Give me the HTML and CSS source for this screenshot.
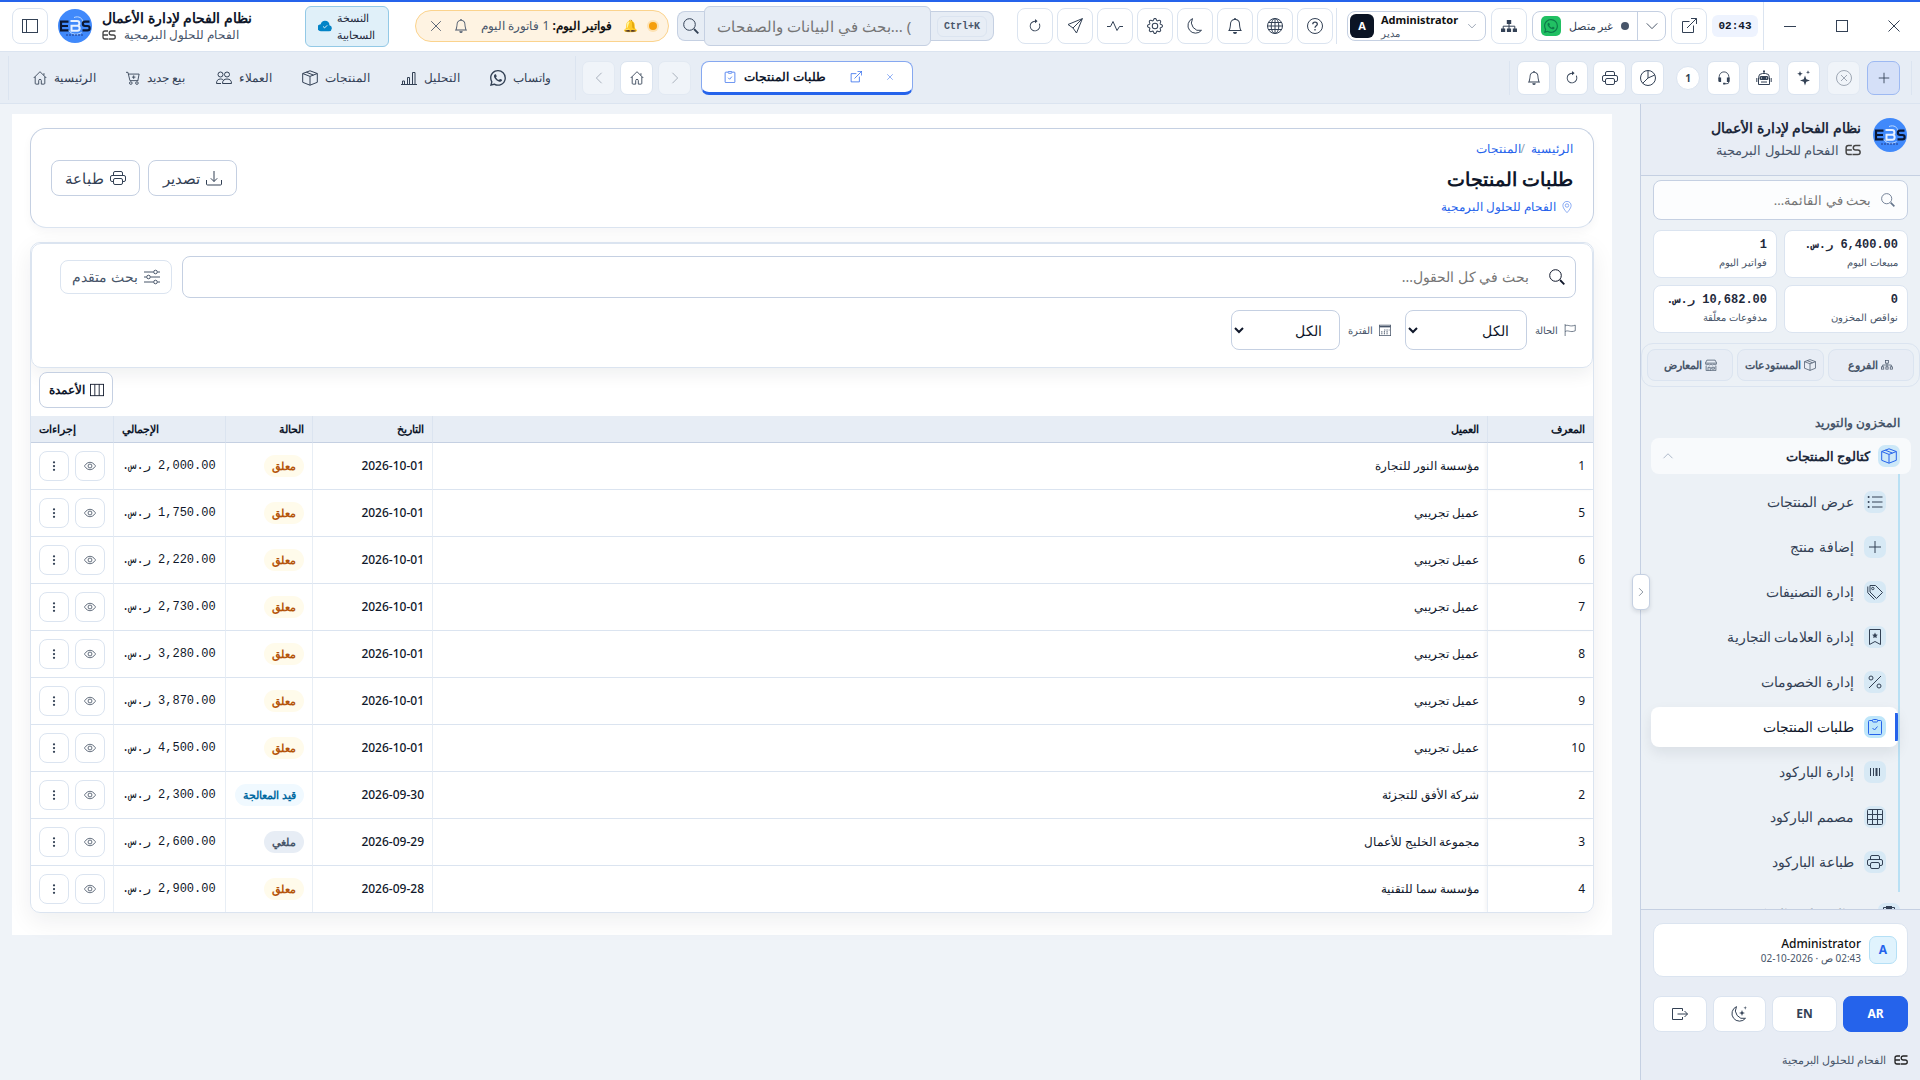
FILE: index.html
```html
<!DOCTYPE html>
<html lang="ar" dir="rtl">
<head>
<meta charset="utf-8">
<meta name="viewport" content="width=device-width, initial-scale=1">
<title>طلبات المنتجات</title>
<link rel="stylesheet" href="styles.css">
</head>
<body>
<svg class="sprite" aria-hidden="true">
  <symbol id="whatsapp" viewBox="0 0 16 16"><path d="M13.601 2.326A7.85 7.85 0 0 0 7.994 0C3.627 0 .068 3.558.064 7.926c0 1.399.366 2.76 1.057 3.965L0 16l4.204-1.102a7.9 7.9 0 0 0 3.79.965h.004c4.368 0 7.926-3.558 7.93-7.93A7.9 7.9 0 0 0 13.6 2.326zM7.994 14.521a6.6 6.6 0 0 1-3.356-.92l-.24-.144-2.494.654.666-2.433-.156-.251a6.56 6.56 0 0 1-1.007-3.505c0-3.626 2.957-6.584 6.591-6.584a6.56 6.56 0 0 1 4.66 1.931 6.56 6.56 0 0 1 1.928 4.66c-.004 3.639-2.961 6.592-6.592 6.592m3.615-4.934c-.197-.099-1.17-.578-1.353-.646-.182-.065-.315-.099-.445.099-.133.197-.513.646-.627.775-.114.133-.232.148-.43.05-.197-.1-.836-.308-1.592-.985-.59-.525-.985-1.175-1.103-1.372-.114-.198-.011-.304.088-.403.087-.088.197-.232.296-.346.1-.114.133-.198.198-.33.065-.134.034-.248-.015-.347-.05-.099-.445-1.076-.612-1.47-.16-.389-.323-.335-.445-.34-.114-.007-.247-.007-.38-.007a.73.73 0 0 0-.529.247c-.182.198-.691.677-.691 1.654s.71 1.916.81 2.049c.098.133 1.394 2.132 3.383 2.992.47.205.84.326 1.129.418.475.152.904.129 1.246.08.38-.058 1.171-.48 1.338-.943.164-.464.164-.86.114-.943-.049-.084-.182-.133-.38-.232" fill="currentColor" stroke="none"/></symbol>
  <symbol id="panel" viewBox="0 0 16 16"><rect x=".5" y="1.5" width="15" height="13"/><path d="M4.5 1.5v13"/></symbol>
  <symbol id="house" viewBox="0 0 16 16"><path d="M.8 8 8 .8 15.200 8M2.500 6.500v7.500a1 1 0 0 0 1 1H6.500v-4a1.500 1.500 0 0 1 3 0v4h3a1 1 0 0 0 1-1V6.500M12.500 5V2.500"/></symbol>
  <symbol id="cart" viewBox="0 0 16 16"><path d="M0 1.500h2.200L4.500 11h9.500M2.700 3.500h12.300l-1.500 7.500M8.800 5v4M6.800 7h4"/><circle cx="5.500" cy="13.800" r="1.500"/><circle cx="12.500" cy="13.800" r="1.500"/></symbol>
  <symbol id="people" viewBox="0 0 16 16"><circle cx="4.500" cy="4.500" r="2.500"/><circle cx="11" cy="4.500" r="2.500"/><path d="M.5 13.500c0-3 1.500-4.500 4-4.500 1.500 0 2.500.5 3.200 1.500M6.500 13.500c0-3 1.500-4.500 4.500-4.500s4.500 1.500 4.500 4.500zM.5 13.500H5"/></symbol>
  <symbol id="box" viewBox="0 0 16 16"><path d="M8 .8 15.300 3.500v8.800L8 15.200.7 12.300V3.500zM.7 3.500 8 6.400l7.300-2.900M8 6.400v8.800M4.300 2.200l7.200 2.900"/></symbol>
  <symbol id="chart" viewBox="0 0 16 16"><path d="M0 14.500h16M1.500 14.500v-3.500h2v3.500M6.500 14.500V7.500h2v7M11.500 14.500v-12h2.500v12"/></symbol>
  <symbol id="left" viewBox="0 0 16 16"><path d="M11 2 5 8l6 6"/></symbol>
  <symbol id="right" viewBox="0 0 16 16"><path d="m5 2 6 6-6 6"/></symbol>
  <symbol id="down" viewBox="0 0 16 16"><path d="m2 5 6 6 6-6"/></symbol>
  <symbol id="up" viewBox="0 0 16 16"><path d="m2 11 6-6 6 6"/></symbol>
  <symbol id="external" viewBox="0 0 16 16"><path d="M8.500 3.500h-7v11h11v-7M10 .5h5.500V6M15.500.5 6 10"/></symbol>
  <symbol id="close" viewBox="0 0 16 16"><path d="m2.500 2.500 11 11M13.500 2.500l-11 11"/></symbol>
  <symbol id="minimize" viewBox="0 0 16 16"><path d="M2 8.500h12"/></symbol>
  <symbol id="maximize" viewBox="0 0 16 16"><rect x="2.500" y="2.500" width="11" height="11"/></symbol>
  <symbol id="clipcheck" viewBox="0 0 16 16"><path d="M5 1.500H2.500a1 1 0 0 0-1 1v12a1 1 0 0 0 1 1h11a1 1 0 0 0 1-1v-12a1 1 0 0 0-1-1H11M5.500 9l2 2 3-3.500"/><rect x="5.500" y=".5" width="5" height="2.500" rx=".8"/></symbol>
  <symbol id="clipboard" viewBox="0 0 16 16"><path d="M5 1.500H2.500v14h11v-14H11"/><rect x="5.500" y=".5" width="5" height="2.500" fill="currentColor"/></symbol>
  <symbol id="bell" viewBox="0 0 16 16"><path d="M8 16a2 2 0 0 0 2-2H6a2 2 0 0 0 2 2M8 1.918l-.797.161A4 4 0 0 0 4 6c0 .628-.134 2.197-.459 3.742-.16.767-.376 1.566-.663 2.258h10.244c-.287-.692-.502-1.49-.663-2.258C12.134 8.197 12 6.628 12 6a4 4 0 0 0-3.203-3.920zM14.220 12c.223.447.481.801.78 1H1c.299-.199.557-.553.78-1C2.680 10.200 3 6.880 3 6c0-2.420 1.720-4.440 4.005-4.901a1 1 0 1 1 1.990 0A5 5 0 0 1 13 6c0 .88.32 4.200 1.220 6" fill="currentColor" stroke="none"/></symbol>
  <symbol id="refresh" viewBox="0 0 16 16"><path d="M8 3a5 5 0 1 0 4.546 2.914.5.5 0 0 1 .908-.417A6 6 0 1 1 8 2z" fill="currentColor" stroke="none"/><path d="M8 4.466V.534a.25.25 0 0 1 .41-.192l2.360 1.966c.12.1.12.284 0 .384L8.410 4.658A.25.25 0 0 1 8 4.466" fill="currentColor" stroke="none"/></symbol>
  <symbol id="send" viewBox="0 0 16 16"><path d="M15.400.6 9.500 15 6 10 1 6.500zM15.400.6 6 10"/></symbol>
  <symbol id="activity" viewBox="0 0 16 16"><path d="M0 8.500h3.500L6 3.500l4 9 2.500-4H16"/></symbol>
  <symbol id="gear" viewBox="0 0 16 16"><path d="M8 4.754a3.246 3.246 0 1 0 0 6.492 3.246 3.246 0 0 0 0-6.492M5.754 8a2.246 2.246 0 1 1 4.492 0 2.246 2.246 0 0 1-4.492 0" fill="currentColor" stroke="none"/><path d="M9.796 1.343c-.527-1.790-3.065-1.790-3.592 0l-.094.319a.873.873 0 0 1-1.255.52l-.292-.16c-1.640-.892-3.433.902-2.540 2.541l.159.292a.873.873 0 0 1-.52 1.255l-.319.094c-1.790.527-1.790 3.065 0 3.592l.319.094a.873.873 0 0 1 .52 1.255l-.16.292c-.892 1.640.901 3.434 2.541 2.540l.292-.159a.873.873 0 0 1 1.255.52l.094.319c.527 1.790 3.065 1.790 3.592 0l.094-.319a.873.873 0 0 1 1.255-.52l.292.16c1.640.893 3.434-.902 2.540-2.541l-.159-.292a.873.873 0 0 1 .52-1.255l.319-.094c1.790-.527 1.790-3.065 0-3.592l-.319-.094a.873.873 0 0 1-.52-1.255l.16-.292c.893-1.640-.902-3.433-2.541-2.540l-.292.159a.873.873 0 0 1-1.255-.52zm-2.633.283c.246-.835 1.428-.835 1.674 0l.094.319a1.873 1.873 0 0 0 2.693 1.115l.291-.16c.764-.415 1.600.42 1.184 1.185l-.159.292a1.873 1.873 0 0 0 1.116 2.692l.318.094c.835.246.835 1.428 0 1.674l-.319.094a1.873 1.873 0 0 0-1.115 2.693l.16.291c.415.764-.42 1.600-1.185 1.184l-.291-.159a1.873 1.873 0 0 0-2.693 1.116l-.094.318c-.246.835-1.428.835-1.674 0l-.094-.319a1.873 1.873 0 0 0-2.692-1.115l-.292.16c-.764.415-1.600-.42-1.184-1.185l.159-.291A1.873 1.873 0 0 0 1.945 8.930l-.319-.094c-.835-.246-.835-1.428 0-1.674l.319-.094A1.873 1.873 0 0 0 3.060 4.377l-.16-.292c-.415-.764.42-1.600 1.185-1.184l.292.159a1.873 1.873 0 0 0 2.692-1.115z" fill="currentColor" stroke="none"/></symbol>
  <symbol id="moon" viewBox="0 0 16 16"><path d="M5.500.6a7.600 7.600 0 1 0 9 11.700A8 8 0 0 1 5.500.6z"/></symbol>
  <symbol id="moonstars" viewBox="0 0 16 16"><path d="M5.500.6a7.600 7.600 0 1 0 9 11.700A8 8 0 0 1 5.500.6z"/><path d="m11 4 .8 2.200L14 7l-2.200.8L11 10l-.8-2.200L8 7l2.200-.8zM14.200 0l.4 1.400L16 1.800l-1.400.5-.4 1.400-.4-1.400-1.400-.5 1.400-.4z" fill="currentColor" stroke="none"/></symbol>
  <symbol id="globe" viewBox="0 0 16 16"><circle cx="8" cy="8" r="7.500"/><ellipse cx="8" cy="8" rx="3.800" ry="7.500"/><path d="M.5 8h15M8 .5v15M1.500 4.500h13M1.500 11.500h13"/></symbol>
  <symbol id="help" viewBox="0 0 16 16"><circle cx="8" cy="8" r="7.500"/><path d="M5.800 6.200C5.800 4.800 6.800 4.200 8 4.200s2.300.7 2.300 2c0 1.600-2.300 1.600-2.300 3.600M8 11v1.500" stroke-width="1.300"/></symbol>
  <symbol id="sitemap" viewBox="0 0 16 16"><path d="M5.800 2h4.400v4H5.800zM0 10.500h4.200v3.500H0zM5.900 10.500h4.200v3.500H5.900zM11.800 10.500H16v3.500h-4.200z" fill="currentColor" stroke="none"/><path d="M8 5v6M2.200 11V8.200h11.600V11"/></symbol>
  <symbol id="branches" viewBox="0 0 16 16"><rect x="6" y="2" width="4" height="3.500"/><path d="M8 5.500V11M2.200 10.500V8h11.600v2.500"/><rect x=".7" y="10.500" width="3" height="3"/><rect x="6.500" y="10.500" width="3" height="3"/><rect x="12.300" y="10.500" width="3" height="3"/></symbol>
  <symbol id="pie" viewBox="0 0 16 16"><circle cx="8" cy="8" r="7.500"/><path d="M8 .5V8L2.700 13.300M8 8l6.800-3"/></symbol>
  <symbol id="headset" viewBox="0 0 16 16"><path d="M2.500 9V6.500a5.500 5.500 0 0 1 11 0V9M13.500 11v1.500a2 2 0 0 1-2 2H9"/><path d="M1.500 7.500h3.200v5H3a1.500 1.500 0 0 1-1.500-1.500zM11.300 7.500h3.200V11a1.500 1.500 0 0 1-1.500 1.500h-1.700zM7 13.500h2.500v2H7z" fill="currentColor" stroke="none"/></symbol>
  <symbol id="robot" viewBox="0 0 16 16"><path d="M8 1v2.500M2.500 14.500v-7a4 4 0 0 1 4-4h3a4 4 0 0 1 4 4v7zM5 12h6M.8 8v4M15.200 8v4"/><rect x="3.500" y="6" width="9" height="4" rx="1.500" fill="currentColor" stroke="none"/><circle cx="8" cy="1.300" r="1" fill="currentColor" stroke="none"/><path d="M5.500 7.500v1M10.500 7.500v1" stroke="#fff"/></symbol>
  <symbol id="stars" viewBox="0 0 16 16"><path d="M9 5.500l1.300 3.700 3.700 1.300-3.700 1.300L9 15.500l-1.300-3.700L4 10.500l3.700-1.300zM4 1l.8 2 2 .8-2 .8L4 6.600l-.8-2-2-.8 2-.8zM12 .2l.5 1.500 1.500.5-1.500.5L12 4.200l-.5-1.500-1.500-.5 1.500-.5z" fill="currentColor" stroke="none"/></symbol>
  <symbol id="xcircle" viewBox="0 0 16 16"><circle cx="8" cy="8" r="7.500"/><path d="m5 5 6 6M11 5l-6 6"/></symbol>
  <symbol id="plus" viewBox="0 0 16 16"><path d="M8 2v12M2 8h12"/></symbol>
  <symbol id="search" viewBox="0 0 16 16"><circle cx="6.500" cy="6.500" r="5.800"/><path d="m11 11 4.300 4.300" stroke-width="1.800"/></symbol>
  <symbol id="cloud" viewBox="0 0 16 16"><path d="M8 2a5 5 0 0 0-4.900 4A4 4 0 0 0 3.800 14h8.700a3.500 3.500 0 0 0 .6-6.900A5.200 5.200 0 0 0 8 2" fill="currentColor" stroke="none"/><path d="m5.800 8.500 1.700 1.700 3-3" stroke="#fff"/></symbol>
  <symbol id="tray" viewBox="0 0 16 16"><path d="M.5 10v4a1 1 0 0 0 1 1h13a1 1 0 0 0 1-1v-4M8 1v10.500M4.800 8.300 8 11.500l3.200-3.200"/></symbol>
  <symbol id="printer" viewBox="0 0 16 16"><path d="M3.500 5.500V3A1.500 1.500 0 0 1 5 1.500h6A1.500 1.500 0 0 1 12.500 3v2.500M3.500 11.500H2A1.500 1.500 0 0 1 .5 10V7A1.500 1.500 0 0 1 2 5.500h12A1.500 1.500 0 0 1 15.500 7v3a1.500 1.500 0 0 1-1.500 1.500h-1.500"/><rect x="3.500" y="8.500" width="9" height="6" rx="1.500"/></symbol>
  <symbol id="sliders" viewBox="0 0 16 16"><path d="M0 3h9.500M13.500 3H16M0 8h2.500M6.500 8H16M0 13h9.500M13.500 13H16"/><circle cx="11.500" cy="3" r="1.800"/><circle cx="4.500" cy="8" r="1.800"/><circle cx="11.500" cy="13" r="1.800"/></symbol>
  <symbol id="flag" viewBox="0 0 16 16"><path d="M1.500 0v16M1.500 2.500c4-2.500 6 2 13.500-1v7.500c-7 3-9-1.500-13.500 1"/></symbol>
  <symbol id="calendar" viewBox="0 0 16 16"><rect x=".5" y="1.500" width="15" height="14"/><path d="M.5 3.500h15" stroke-width="2"/><path d="M7 8h1.500M10 8h1.500M13 8h1M3 10.500h1.500M6.500 10.500H8M10 10.500h1.500M3 13h1.500M6.500 13H8M10 13h1.500" stroke-width="1.500"/></symbol>
  <symbol id="columns" viewBox="0 0 16 16"><rect x=".5" y="1.500" width="15" height="13"/><path d="M5.500 1.500v13M10.500 1.500v13"/></symbol>
  <symbol id="pin" viewBox="0 0 16 16"><path d="M8 15.500S2.500 10 2.500 6a5.500 5.500 0 0 1 11 0c0 4-5.500 9.500-5.500 9.500z"/><circle cx="8" cy="6" r="2.300"/></symbol>
  <symbol id="eye" viewBox="0 0 16 16"><path d="M.6 8S3.500 3 8 3s7.400 5 7.400 5-2.900 5-7.400 5S.6 8 .6 8z"/><circle cx="8" cy="8" r="2.600"/></symbol>
  <symbol id="dots" viewBox="0 0 16 16"><g fill="currentColor" stroke="none"><circle cx="8" cy="3" r="1.500"/><circle cx="8" cy="8" r="1.500"/><circle cx="8" cy="13" r="1.500"/></g></symbol>
  <symbol id="shop" viewBox="0 0 16 16"><path d="M2.500 1.500h11l2 4v1a2 2 0 0 1-3.700 0 2 2 0 0 1-3.800 0 2 2 0 0 1-3.800 0 2 2 0 0 1-3.700 0v-1zM.5 5.500h15M1.500 9v6.500h13V9M4 15.500V11h3v4.500M9 11h3.500v2.500H9z"/></symbol>
  <symbol id="list" viewBox="0 0 16 16"><path d="M5 3h10.500M5 8h10.500M5 13h10.500"/><g fill="currentColor" stroke="none"><circle cx="1.600" cy="3" r="1"/><circle cx="1.600" cy="8" r="1"/><circle cx="1.600" cy="13" r="1"/></g></symbol>
  <symbol id="tags" viewBox="0 0 16 16"><path d="M3 1.500h5.500l7 7-6 6L3 8zM.8 2.500v6.300l6.700 6.700"/><circle cx="5.800" cy="4.500" r="1.200"/></symbol>
  <symbol id="bookmark" viewBox="0 0 16 16"><path d="M2.500.5h11v15L8 12.500l-5.500 3z"/><path d="m8 3.500.9 1.900 2 .3-1.500 1.400.4 2L8 8.200l-1.800.9.4-2-1.500-1.400 2-.3z" fill="currentColor" stroke="none"/></symbol>
  <symbol id="percent" viewBox="0 0 16 16"><path d="M14 2 2 14"/><circle cx="4" cy="4" r="2"/><circle cx="12" cy="12" r="2"/></symbol>
  <symbol id="barcode" viewBox="0 0 16 16"><path d="M3.500 4v8M6.500 4v8M12.500 4v8"/><path d="M9.500 4v8" stroke-width="2"/></symbol>
  <symbol id="grid" viewBox="0 0 16 16"><rect x=".5" y=".5" width="15" height="15" rx="1"/><path d="M.5 5.500h15M.5 10.500h15M5.500.5v15M10.500.5v15"/></symbol>
  <symbol id="logout" viewBox="0 0 16 16"><path d="M10.500 5V2.500h-10v11h10V11M5.500 8h10M12.500 5l3 3-3 3"/></symbol>
  <symbol id="es" viewBox="0 0 28 20"><path d="M12 2H6a4 4 0 0 0-4 4v8a4 4 0 0 0 4 4h6M2 10h10M27 2h-8.500a4 4 0 0 0 0 8h4a4 4 0 0 1 0 8H13" stroke-width="2.600"/></symbol>
  <symbol id="logo" viewBox="0 0 34 34"><circle cx="17" cy="17" r="17" fill="#4089fb" stroke="none"/><path d="M16 8.500c5-2 9 1 8.500 4.500M10.500 21c2 4.500 9 5.500 13 2.500" stroke="#bfdbfe" stroke-width="1"/><path d="M10.500 12.700H3v8.600h7.500M3 17h7M31.500 12.700h-4.500a2.100 2.100 0 0 0 0 4.300h2.500a2.100 2.100 0 0 1 0 4.300h-5" stroke="#0b1733" stroke-width="2.200"/><path d="M12.500 12h6.500a2.400 2.400 0 0 1 0 4.800h-5.500v5h5.800a2.500 2.500 0 0 0 .5-4.900" stroke="#e8f1ff" stroke-width="2"/><path d="M8 26h18" stroke="#1e3a8a" stroke-width="1" stroke-dasharray="2 1"/></symbol>
</svg>

<header class="titlebar" dir="ltr">
  <button class="icon-btn" aria-label="القائمة"><svg class="i16"><use href="#panel"/></svg></button>
  <svg class="logo"><use href="#logo"/></svg>
  <div class="brand">
    <strong dir="rtl">نظام الفحام لإدارة الأعمال</strong>
    <span><svg class="es"><use href="#es"/></svg><bdi>الفحام للحلول البرمجية</bdi></span>
  </div>
  <button class="cloud" dir="rtl"><span>النسخة السحابية</span><svg class="i14"><use href="#cloud"/></svg></button>
  <div class="notice" dir="rtl">
    <i class="pulse"></i><span class="emoji">🔔</span>
    <p><b>فواتير اليوم:</b> 1 فاتورة اليوم</p>
    <svg class="i14"><use href="#bell"/></svg>
    <button class="plain" aria-label="إغلاق"><svg class="i14"><use href="#close"/></svg></button>
  </div>
  <div class="gsearch">
    <span class="gs-icon"><svg class="i16"><use href="#search"/></svg></span>
    <input type="text" aria-label="بحث" placeholder="بحث في البيانات والصفحات... (">
    <span class="gs-key"><kbd>Ctrl+K</kbd></span>
  </div>
  <div class="tools">
    <button class="icon-btn" aria-label="تحديث"><svg class="i14"><use href="#refresh"/></svg></button>
    <button class="icon-btn" aria-label="إرسال"><svg class="i16"><use href="#send"/></svg></button>
    <button class="icon-btn" aria-label="النشاط"><svg class="i16"><use href="#activity"/></svg></button>
    <button class="icon-btn" aria-label="الإعدادات"><svg class="i16"><use href="#gear"/></svg></button>
    <button class="icon-btn" aria-label="الوضع الليلي"><svg class="i16"><use href="#moon"/></svg></button>
    <button class="icon-btn" aria-label="الإشعارات"><svg class="i16"><use href="#bell"/></svg></button>
    <button class="icon-btn" aria-label="اللغة"><svg class="i16"><use href="#globe"/></svg></button>
    <button class="icon-btn" aria-label="مساعدة"><svg class="i16"><use href="#help"/></svg></button>
  </div>
  <div class="account">
    <button class="user"><span class="avatar">A</span><span class="user-text"><b>Administrator</b><small>مدير</small></span><svg class="i10"><use href="#down"/></svg></button>
    <button class="icon-btn" aria-label="الهيكل"><svg class="i16"><use href="#sitemap"/></svg></button>
    <div class="wa">
      <button class="wa-main"><span class="wa-logo"><svg class="i16"><use href="#whatsapp"/></svg></span><span>غير متصل</span><i class="off"></i></button>
      <button class="wa-more" aria-label="خيارات"><svg class="i14"><use href="#down"/></svg></button>
    </div>
    <button class="icon-btn" aria-label="فتح"><svg class="i16"><use href="#external"/></svg></button>
    <time class="clock">02:43</time>
  </div>
  <div class="window">
    <button aria-label="تصغير"><svg class="i16"><use href="#minimize"/></svg></button>
    <button aria-label="تكبير"><svg class="i16"><use href="#maximize"/></svg></button>
    <button aria-label="إغلاق"><svg class="i16"><use href="#close"/></svg></button>
  </div>
</header>

<nav class="toolbar" dir="ltr">
  <div class="links">
    <a href="#"><svg class="i14"><use href="#house"/></svg>الرئيسية</a>
    <a href="#"><svg class="i14"><use href="#cart"/></svg>بيع جديد</a>
    <a href="#"><svg class="i16"><use href="#people"/></svg>العملاء</a>
    <a href="#"><svg class="i16"><use href="#box"/></svg>المنتجات</a>
    <a href="#"><svg class="i16"><use href="#chart"/></svg>التحليل</a>
    <a href="#"><svg class="i16"><use href="#whatsapp"/></svg>واتساب</a>
  </div>
  <div class="history">
    <button class="sq faded" disabled aria-label="السابق"><svg class="i14"><use href="#left"/></svg></button>
    <button class="sq" aria-label="الرئيسية"><svg class="i14"><use href="#house"/></svg></button>
    <button class="sq faded" disabled aria-label="التالي"><svg class="i14"><use href="#right"/></svg></button>
  </div>
  <div class="tab"><svg class="i12"><use href="#clipcheck"/></svg><b>طلبات المنتجات</b><svg class="i12 tab-open"><use href="#external"/></svg><button class="plain" aria-label="إغلاق"><svg class="i8"><use href="#close"/></svg></button></div>
  <div class="actions">
    <button class="sq" aria-label="الإشعارات"><svg class="i14"><use href="#bell"/></svg></button>
    <button class="sq" aria-label="تحديث"><svg class="i14"><use href="#refresh"/></svg></button>
    <button class="sq" aria-label="طباعة"><svg class="i16"><use href="#printer"/></svg></button>
    <button class="sq" aria-label="تقارير"><svg class="i16"><use href="#pie"/></svg></button>
    <span class="count">1</span>
    <button class="sq" aria-label="الدعم"><svg class="i14"><use href="#headset"/></svg></button>
    <button class="sq" aria-label="المساعد"><svg class="i16"><use href="#robot"/></svg></button>
    <button class="sq" aria-label="ذكاء"><svg class="i16"><use href="#stars"/></svg></button>
    <button class="sq faded" disabled aria-label="إلغاء"><svg class="i16"><use href="#xcircle"/></svg></button>
    <button class="sq add" aria-label="إضافة"><svg class="i14"><use href="#plus"/></svg></button>
  </div>
</nav>

<div class="shell">
  <aside class="sidebar">
    <button class="handle" aria-label="طي القائمة"><svg class="i10"><use href="#right"/></svg></button>
    <div class="side-head">
      <svg class="logo"><use href="#logo"/></svg>
      <div><strong>نظام الفحام لإدارة الأعمال</strong><span><svg class="es"><use href="#es"/></svg>الفحام للحلول البرمجية</span></div>
    </div>
    <label class="side-search"><svg class="i14"><use href="#search"/></svg><input type="text" aria-label="بحث في القائمة" placeholder="بحث في القائمة..."></label>
    <div class="stats">
      <div><b>6,400.00 ر.س.</b><span>مبيعات اليوم</span></div>
      <div><b>1</b><span>فواتير اليوم</span></div>
      <div><b>0</b><span>نواقص المخزون</span></div>
      <div><b>10,682.00 ر.س.</b><span>مدفوعات معلّقة</span></div>
    </div>
    <div class="segments">
      <button><svg class="i12"><use href="#branches"/></svg>الفروع</button>
      <button><svg class="i12"><use href="#box"/></svg>المستودعات</button>
      <button><svg class="i12"><use href="#shop"/></svg>المعارض</button>
    </div>
    <nav class="menu">
      <h2>المخزون والتوريد</h2>
      <button class="parent"><span class="chip"><svg class="i16"><use href="#box"/></svg></span>كتالوج المنتجات<svg class="i12 caret"><use href="#up"/></svg></button>
      <ul>
        <li><a href="#"><span class="chip"><svg class="i16"><use href="#list"/></svg></span>عرض المنتجات</a></li>
        <li><a href="#"><span class="chip"><svg class="i16"><use href="#plus"/></svg></span>إضافة منتج</a></li>
        <li><a href="#"><span class="chip"><svg class="i16"><use href="#tags"/></svg></span>إدارة التصنيفات</a></li>
        <li><a href="#"><span class="chip"><svg class="i16"><use href="#bookmark"/></svg></span>إدارة العلامات التجارية</a></li>
        <li><a href="#"><span class="chip"><svg class="i16"><use href="#percent"/></svg></span>إدارة الخصومات</a></li>
        <li><a href="#" class="active"><span class="chip"><svg class="i16"><use href="#clipcheck"/></svg></span>طلبات المنتجات</a></li>
        <li><a href="#"><span class="chip"><svg class="i16"><use href="#barcode"/></svg></span>إدارة الباركود</a></li>
        <li><a href="#"><span class="chip"><svg class="i16"><use href="#grid"/></svg></span>مصمم الباركود</a></li>
        <li><a href="#"><span class="chip"><svg class="i16"><use href="#printer"/></svg></span>طباعة الباركود</a></li>
      </ul>
      <button class="parent next"><span class="chip"><svg class="i16"><use href="#clipboard"/></svg></span>جرد المنتجات والحركة</button>
    </nav>
    <footer class="side-foot">
      <div class="me"><span class="me-avatar">A</span><div><b>Administrator</b><small>02:43 ص · 2026-10-02</small></div></div>
      <div class="foot-btns">
        <button class="primary">AR</button>
        <button>EN</button>
        <button class="slim" aria-label="الوضع الليلي"><svg class="i16"><use href="#moonstars"/></svg></button>
        <button class="slim" aria-label="خروج"><svg class="i16"><use href="#logout"/></svg></button>
      </div>
      <p class="credit"><svg class="es"><use href="#es"/></svg>الفحام للحلول البرمجية</p>
    </footer>
  </aside>

  <main>
    <div class="panel">
      <section class="page-head">
        <div>
          <p class="crumbs"><a href="#">الرئيسية</a><span>/</span><a href="#">المنتجات</a></p>
          <h1>طلبات المنتجات</h1>
          <p class="place"><svg class="i12"><use href="#pin"/></svg>الفحام للحلول البرمجية</p>
        </div>
        <div class="head-btns">
          <button class="btn"><svg class="i16"><use href="#tray"/></svg>تصدير</button>
          <button class="btn"><svg class="i16"><use href="#printer"/></svg>طباعة</button>
        </div>
      </section>

      <section class="grid-card">
        <div class="filters">
          <div class="filter-row">
            <label class="big-search"><svg class="i16"><use href="#search"/></svg><input type="text" aria-label="بحث" placeholder="بحث في كل الحقول..."></label>
            <button class="adv"><svg class="i16"><use href="#sliders"/></svg>بحث متقدم</button>
          </div>
          <div class="filter-row selects">
            <label for="state"><svg class="i12"><use href="#flag"/></svg>الحالة</label>
            <select id="state" class="wide"><option>الكل</option></select>
            <label for="period"><svg class="i12"><use href="#calendar"/></svg>الفترة</label>
            <select id="period"><option>الكل</option></select>
          </div>
        </div>
        <div class="cols"><button class="btn-cols"><svg class="i14"><use href="#columns"/></svg>الأعمدة</button></div>
        <table>
          <colgroup><col class="c-id"><col><col class="c-date"><col class="c-state"><col class="c-total"><col class="c-act"></colgroup>
          <thead><tr><th>المعرف</th><th>العميل</th><th>التاريخ</th><th>الحالة</th><th class="end">الإجمالي</th><th class="end">إجراءات</th></tr></thead>
          <tbody>
            <tr><td>1</td><td>مؤسسة النور للتجارة</td><td><time>2026-10-01</time></td><td><span class="badge wait">معلق</span></td><td class="money">2,000.00 ر.س.</td><td><div class="row-btns"><button aria-label="عرض"><svg class="i12"><use href="#eye"/></svg></button><button aria-label="المزيد"><svg class="i12"><use href="#dots"/></svg></button></div></td></tr>
            <tr><td>5</td><td>عميل تجريبي</td><td><time>2026-10-01</time></td><td><span class="badge wait">معلق</span></td><td class="money">1,750.00 ر.س.</td><td><div class="row-btns"><button aria-label="عرض"><svg class="i12"><use href="#eye"/></svg></button><button aria-label="المزيد"><svg class="i12"><use href="#dots"/></svg></button></div></td></tr>
            <tr><td>6</td><td>عميل تجريبي</td><td><time>2026-10-01</time></td><td><span class="badge wait">معلق</span></td><td class="money">2,220.00 ر.س.</td><td><div class="row-btns"><button aria-label="عرض"><svg class="i12"><use href="#eye"/></svg></button><button aria-label="المزيد"><svg class="i12"><use href="#dots"/></svg></button></div></td></tr>
            <tr><td>7</td><td>عميل تجريبي</td><td><time>2026-10-01</time></td><td><span class="badge wait">معلق</span></td><td class="money">2,730.00 ر.س.</td><td><div class="row-btns"><button aria-label="عرض"><svg class="i12"><use href="#eye"/></svg></button><button aria-label="المزيد"><svg class="i12"><use href="#dots"/></svg></button></div></td></tr>
            <tr><td>8</td><td>عميل تجريبي</td><td><time>2026-10-01</time></td><td><span class="badge wait">معلق</span></td><td class="money">3,280.00 ر.س.</td><td><div class="row-btns"><button aria-label="عرض"><svg class="i12"><use href="#eye"/></svg></button><button aria-label="المزيد"><svg class="i12"><use href="#dots"/></svg></button></div></td></tr>
            <tr><td>9</td><td>عميل تجريبي</td><td><time>2026-10-01</time></td><td><span class="badge wait">معلق</span></td><td class="money">3,870.00 ر.س.</td><td><div class="row-btns"><button aria-label="عرض"><svg class="i12"><use href="#eye"/></svg></button><button aria-label="المزيد"><svg class="i12"><use href="#dots"/></svg></button></div></td></tr>
            <tr><td>10</td><td>عميل تجريبي</td><td><time>2026-10-01</time></td><td><span class="badge wait">معلق</span></td><td class="money">4,500.00 ر.س.</td><td><div class="row-btns"><button aria-label="عرض"><svg class="i12"><use href="#eye"/></svg></button><button aria-label="المزيد"><svg class="i12"><use href="#dots"/></svg></button></div></td></tr>
            <tr><td>2</td><td>شركة الأفق للتجزئة</td><td><time>2026-09-30</time></td><td><span class="badge work">قيد المعالجة</span></td><td class="money">2,300.00 ر.س.</td><td><div class="row-btns"><button aria-label="عرض"><svg class="i12"><use href="#eye"/></svg></button><button aria-label="المزيد"><svg class="i12"><use href="#dots"/></svg></button></div></td></tr>
            <tr><td>3</td><td>مجموعة الخليج للأعمال</td><td><time>2026-09-29</time></td><td><span class="badge off-state">ملغي</span></td><td class="money">2,600.00 ر.س.</td><td><div class="row-btns"><button aria-label="عرض"><svg class="i12"><use href="#eye"/></svg></button><button aria-label="المزيد"><svg class="i12"><use href="#dots"/></svg></button></div></td></tr>
            <tr><td>4</td><td>مؤسسة سما للتقنية</td><td><time>2026-09-28</time></td><td><span class="badge wait">معلق</span></td><td class="money">2,900.00 ر.س.</td><td><div class="row-btns"><button aria-label="عرض"><svg class="i12"><use href="#eye"/></svg></button><button aria-label="المزيد"><svg class="i12"><use href="#dots"/></svg></button></div></td></tr>
          </tbody>
        </table>
      </section>
    </div>
  </main>
</div>
</body>
</html>
```
FILE: styles.css
```css
:root {
  --ink: #0f172a;
  --text: #334155;
  --muted: #475569;
  --line: #dbe4f0;
  --line-strong: #c5d0e2;
  --bar: #e7edf5;
  --blue: #2563eb;
}

* { box-sizing: border-box; }

body {
  margin: 0;
  height: 100vh;
  display: flex;
  flex-direction: column;
  overflow: hidden;
  font: 12px/18px "Noto Sans", sans-serif;
  color: var(--ink);
  background: #eff3f8;
}

p, h1, h2, ul { margin: 0; padding: 0; list-style: none; }
a { color: inherit; text-decoration: none; }
button, input, select { font: inherit; color: inherit; margin: 0; }
button { padding: 0; border: 0; background: none; display: flex; align-items: center; justify-content: center; }
input { border: 0; outline: 0; background: none; min-width: 0; padding: 0; }

svg { fill: none; stroke: currentColor; stroke-width: 1; flex: none; }
.sprite { position: absolute; width: 0; height: 0; }
.i8 { width: 8px; height: 8px; }
.i10 { width: 10px; height: 10px; }
.i12 { width: 12px; height: 12px; }
.i14 { width: 14px; height: 14px; }
.i16 { width: 16px; height: 16px; }
.logo { width: 34px; height: 34px; }
.es { width: 14px; height: 10px; color: #444; }

/* Title bar */
.titlebar {
  flex: none;
  display: flex;
  align-items: center;
  height: 52px;
  padding-left: 12px;
  padding-bottom: 1px;
  border-top: 2px solid var(--blue);
  border-bottom: 1px solid var(--line);
  background: #fff;
  color: var(--text);
}
.icon-btn { width: 36px; height: 36px; border: 1px solid var(--line); border-radius: 8px; background: #fff; flex: none; }
.titlebar > .logo { margin: 0 10px; }
.brand { display: flex; flex-direction: column; width: 203px; flex: none; align-items: flex-start; }
.brand strong { font-size: 14px; line-height: 18px; color: var(--ink); }
.brand span { display: flex; align-items: center; gap: 8px; font-size: 12px; line-height: 16px; color: var(--muted); }
.cloud {
  width: 84px; height: 41px; gap: 5px; flex: none;
  border: 1px solid #93c9e6; border-radius: 6px;
  background: #e0f0f9; color: #0284c7;
}
.cloud span { width: 40px; font-size: 11px; line-height: 17px; text-align: left; color: #1e293b; }
.notice {
  display: flex; align-items: center; gap: 11px;
  width: 254px; height: 32px; margin: 0 8px 0 26px; padding: 0 11px 0 13px; flex: none;
  border: 1px solid #fbd38d; border-radius: 16px; background: #fef3e2; color: var(--muted);
}
.notice p { flex: 1; font-size: 12px; white-space: nowrap; }
.notice b { color: #111; }
.pulse { width: 8px; height: 8px; flex: none; border-radius: 50%; background: #f59e0b; box-shadow: 0 0 0 2px #fde2b3; }
.emoji { font-size: 12px; }
.plain { color: inherit; }
.gsearch { display: flex; align-items: center; flex: 1; min-width: 200px; max-width: 317px; }
.gs-icon, .gs-key { display: flex; align-items: center; justify-content: center; height: 30px; border: 1px solid var(--line-strong); background: var(--bar); }
.gs-icon { width: 27px; border-radius: 8px 0 0 8px; border-right: 0; }
.gs-key { width: 63px; border-radius: 0 8px 8px 0; border-left: 0; }
.gsearch input { flex: 1; height: 40px; padding: 0 12px; font-size: 15px; border: 1px solid var(--line-strong); border-radius: 6px; background: var(--bar); }
input::placeholder { color: #757575; opacity: 1; }
kbd { padding: 0 6px; border: 1px solid var(--line); border-radius: 6px; font: bold 10px/19px "Liberation Mono", monospace; color: var(--muted); }
.tools { display: flex; gap: 4px; margin-left: auto; padding-left: 21px; padding-right: 3px; border-right: 1px solid var(--line); }
.account { display: flex; align-items: center; gap: 5px; padding: 0 5px 0 10px; }
.user { width: 139px; height: 30px; gap: 7px; padding: 0 8px 0 2px; border: 1px solid var(--line-strong); border-radius: 8px; justify-content: flex-start; }
.user svg { margin-left: auto; color: #64748b; }
.avatar { width: 24px; height: 24px; border-radius: 6px; background: #0b1424; color: #fff; font: bold 11px/24px "Noto Sans", sans-serif; }
.user-text { display: flex; flex-direction: column; align-items: flex-start; }
.user-text b { font-size: 11px; line-height: 14px; color: #111; }
.user-text small { font-size: 10px; line-height: 12px; color: var(--muted); }
.wa { display: flex; width: 134px; height: 30px; border: 1px solid var(--line-strong); border-radius: 8px; }
.wa-main { flex: 1; gap: 8px; font-size: 11px; white-space: nowrap; }
.wa-logo { display: flex; padding: 3px; border-radius: 5px; background: #21c063; color: #0d7a4a; }
.wa-logo svg { width: 14px; height: 14px; }
.off { width: 8px; height: 8px; border-radius: 50%; background: var(--muted); }
.wa-more { width: 28px; border-left: 1px solid var(--line-strong); }
.clock { width: 46px; border-radius: 6px; background: #eef3fe; text-align: center; font: bold 11px/22px "Liberation Mono", monospace; color: var(--ink); }
.window { display: flex; align-self: stretch; border-left: 1px solid var(--line); }
.window button { width: 52px; }

/* Toolbar */
.toolbar { flex: none; display: flex; align-items: center; height: 52px; padding: 0 8px; border-bottom: 1px solid var(--line); background: var(--bar); color: var(--text); }
.links { display: flex; align-items: center; justify-content: space-between; gap: 20px; width: 568px; height: 44px; padding: 0 24px; border: solid var(--line); border-width: 0 1px; }
.links a { display: flex; align-items: center; gap: 7px; font-size: 12px; white-space: nowrap; }
.history { display: flex; gap: 5px; padding: 0 10px 0 6px; }
.sq { width: 33px; height: 34px; flex: none; border: 1px solid var(--line); border-radius: 7px; background: #fff; }
.faded { opacity: .4; }
.tab { display: flex; align-items: center; justify-content: center; gap: 8px; width: 212px; height: 34px; padding-left: 4px; border: 1px solid #86a8f0; border-bottom: 3px solid var(--blue); border-radius: 8px; background: #fff; color: var(--blue); }
.tab b { color: var(--ink); white-space: nowrap; }
.tab-open { margin: 0 16px; }
.actions { display: flex; align-items: center; gap: 5px; margin-left: auto; padding: 0 11px 0 7px; border: solid var(--line); border-width: 0 1px; }
.count { width: 24px; margin: 0 2px 0 7px; border: 1px solid var(--line); border-radius: 12px; background: #fff; text-align: center; font: bold 10px/22px "Noto Sans", sans-serif; }
.add { border-color: #9db9f2; background: #d5e0f8; }
.actions .sq:nth-child(n+7) { margin-left: 2px; }

/* Shell */
.shell { flex: 1; min-height: 0; display: flex; }
main { flex: 1; min-width: 0; padding: 10px 28px 10px 12px; overflow: auto; }
.panel { padding: 14px 18px 22px; background: #fff; }

/* Sidebar */
.sidebar { position: relative; display: flex; flex-direction: column; width: 280px; flex: none; border-left: 1px solid var(--line-strong); background: #ecf1f6; color: var(--text); }
.handle { position: absolute; left: -9px; top: 470px; width: 18px; height: 36px; border: 1px solid var(--line-strong); border-radius: 6px; background: #fff; box-shadow: 0 2px 4px #0f172a1f; color: var(--muted); z-index: 1; }
.side-head { display: flex; align-items: flex-start; gap: 12px; height: 72px; padding: 14px 13px; border-bottom: 1px solid var(--line-strong); background: #e8edf5; flex: none; }
.side-head div { display: flex; flex-direction: column; }
.side-head strong { font-size: 14px; line-height: 20px; margin-bottom: 2px; color: #1e293b; }
.side-head span { display: flex; align-items: center; gap: 6px; font-size: 13px; line-height: 20px; color: var(--muted); }
.side-head .es { width: 16px; height: 12px; }
.side-search { display: flex; align-items: center; gap: 10px; height: 40px; margin: 4px 12px 10px; padding: 0 12px; border: 1px solid var(--line-strong); border-radius: 8px; background: #fcfdfe; flex: none; color: #64748b; }
.side-search input { flex: 1; font-size: 13px; }
.stats { display: grid; grid-template-columns: repeat(2, minmax(0, 1fr)); gap: 7px; padding: 0 12px; flex: none; }
.stats div { height: 48px; padding: 4px 9px; border: 1px solid var(--line); border-radius: 8px; background: #fff; display: flex; flex-direction: column; }
.stats b { font: bold 12px/20px "Liberation Mono", monospace; color: #1e293b; white-space: nowrap; }
.stats span { font-size: 10px; line-height: 14px; color: var(--muted); }
.segments { display: grid; grid-template-columns: repeat(3, 1fr); gap: 4px; margin-top: 10px; padding: 5px; border: 1px solid var(--line); border-radius: 12px; flex: none; }
.segments button { height: 32px; gap: 3px; border: 1px solid var(--line); border-radius: 8px; background: #e8edf5; font-size: 11px; font-weight: bold; color: var(--muted); white-space: nowrap; }
.menu { flex: 1; min-height: 0; overflow: hidden; padding: 27px 9px 0 10px; }
.menu h2 { padding: 0 11px; font-size: 12px; line-height: 18px; margin-bottom: 6px; color: var(--muted); }
.parent { width: 100%; height: 36px; gap: 8px; padding: 0 11px; border-radius: 8px; background: #f8fafc; justify-content: flex-start; font-size: 13px; font-weight: bold; color: #1e293b; }
.caret { margin-right: auto; color: #94a3b8; }
.chip { display: flex; align-items: center; justify-content: center; width: 22px; height: 22px; border-radius: 7px; background: #d7e9f5; }
.parent .chip { background: #cde8f8; color: var(--blue); }
.menu ul { display: flex; flex-direction: column; gap: 5px; margin-right: 11px; padding: 8px 0 10px; border-right: 2px solid #b9e0f4; }
.menu li a { display: flex; align-items: center; gap: 10px; height: 40px; padding: 0 12px; font-size: 14px; border-radius: 8px; }
.menu li .active { background: linear-gradient(var(--blue), var(--blue)) right center / 3px 28px no-repeat #fff; box-shadow: 0 6px 14px #0f172a14; color: var(--ink); }
.active .chip { background: #bfe6fa; color: var(--blue); }
.next { margin-top: 4px; background: none; }
.next .chip { background: #d7e9f5; color: var(--text); }
.side-foot { padding: 13px 12px; border-top: 1px solid var(--line-strong); background: #e8edf5; flex: none; height: 171px; }
.me { display: flex; align-items: center; gap: 8px; height: 54px; padding: 0 10px; border: 1px solid var(--line); border-radius: 10px; background: #fff; }
.me-avatar { width: 28px; border: 1px solid #b5e0f6; border-radius: 7px; background: #e0f3fd; text-align: center; font-weight: bold; line-height: 26px; color: var(--blue); }
.me div { display: flex; flex-direction: column; color: #111; }
.me b { font-size: 12px; line-height: 15px; font-weight: 500; }
.me small { font-size: 10px; line-height: 14px; color: var(--muted); }
.foot-btns { display: flex; gap: 6px; margin: 19px 0 19px; }
.foot-btns button { flex: 66; height: 36px; border: 1px solid var(--line); border-radius: 8px; background: #fff; font-weight: bold; }
.foot-btns .slim { flex: 54; }
.foot-btns .primary { border-color: var(--blue); background: var(--blue); color: #fff; }
.credit { display: flex; align-items: center; gap: 8px; font-size: 11px; color: var(--muted); }
.credit .es { color: #222; }

/* Page heading */
.page-head { display: flex; align-items: center; justify-content: space-between; min-height: 100px; padding: 0 20px; border: 1px solid var(--line-strong); border-bottom-color: var(--line); border-radius: 16px; box-shadow: 0 4px 10px #0f172a0a; }
.crumbs { display: flex; color: var(--blue); line-height: 20px; }
.crumbs span { padding: 0 6px 0 0; color: #94a3b8; }
.page-head h1 { font-size: 19px; line-height: 28px; margin: 6px 0 4px; }
.place { display: flex; align-items: center; gap: 5px; line-height: 20px; color: var(--blue); }
.place svg { opacity: .7; }
.head-btns { display: flex; gap: 8px; }
.btn { width: 89px; height: 36px; gap: 6px; border: 1px solid var(--line-strong); border-radius: 8px; background: #fff; font-size: 15px; color: var(--text); }

/* Orders card */
.grid-card { margin-top: 14px; border: 1px solid var(--line); border-radius: 10px; overflow: hidden; box-shadow: 0 8px 24px #0f172a12; }
.filters { display: flex; flex-direction: column; gap: 12px; height: 125px; padding: 12px 16px; border: 1px solid var(--line); border-radius: 10px; box-shadow: 0 6px 18px #0f172a12; }
.filter-row { display: flex; align-items: center; gap: 10px; }
.big-search { flex: 1; display: flex; align-items: center; gap: 20px; height: 42px; padding: 0 10px; border: 1px solid var(--line-strong); border-radius: 8px; }
.big-search input { flex: 1; font-size: 14px; }
.adv { width: 112px; height: 34px; gap: 6px; margin-left: 12px; border: 1px solid var(--line); border-radius: 8px; font-size: 14px; color: var(--muted); }
.selects label { display: flex; align-items: center; gap: 6px; font-size: 10px; color: var(--muted); }
.selects { gap: 8px; }
select { width: 109px; height: 40px; padding: 0 13px 0 0; border: 1px solid var(--line-strong); border-radius: 8px; background: #fff; font-size: 14px; }
.selects .wide { width: 122px; }
.wide + label { margin-right: 6px; }
.cols { display: flex; justify-content: flex-end; padding: 4px 8px 8px; }
.btn-cols { width: 74px; height: 36px; gap: 5px; border: 1px solid var(--line-strong); border-radius: 8px; background: #fff; font-weight: bold; }

table { width: 100%; table-layout: fixed; border-collapse: separate; border-spacing: 0; }
.c-id { width: 106px; }
.c-date { width: 120px; }
.c-state { width: 87px; }
.c-total { width: 112px; }
.c-act { width: 82px; }
th { height: 27px; padding: 0 8px; border-bottom: 1px solid var(--line-strong); border-left: 1px solid var(--line); background: var(--bar); font-size: 11px; line-height: 14px; text-align: right; }
th.end { text-align: left; }
td { height: 47px; padding: 0 8px; border-bottom: 1px solid var(--line); border-left: 1px solid #e8eef5; font-size: 12px; }
th:last-child, td:last-child { border-left: 0; }
tr:last-child td { height: 46px; border-bottom: 0; }
td:first-child { box-shadow: -2px 0 3px #0f172a0a; }
td time { display: inline-block; direction: ltr; font-weight: 500; }
.money { font: 12px/18px "Liberation Mono", monospace; text-align: left; white-space: nowrap; }
.badge { display: inline-block; padding: 0 8px; border-radius: 11px; font-size: 11px; font-weight: bold; line-height: 22px; white-space: nowrap; }
.wait { background: #fffbeb; color: #b45309; }
.work { background: #f0f9ff; color: #0369a1; }
.off-state { background: var(--bar); color: var(--muted); }
.row-btns { display: flex; gap: 6px; }
.row-btns button { width: 30px; height: 30px; border: 1px solid var(--line); border-radius: 8px; background: #fff; color: var(--text); }
```
